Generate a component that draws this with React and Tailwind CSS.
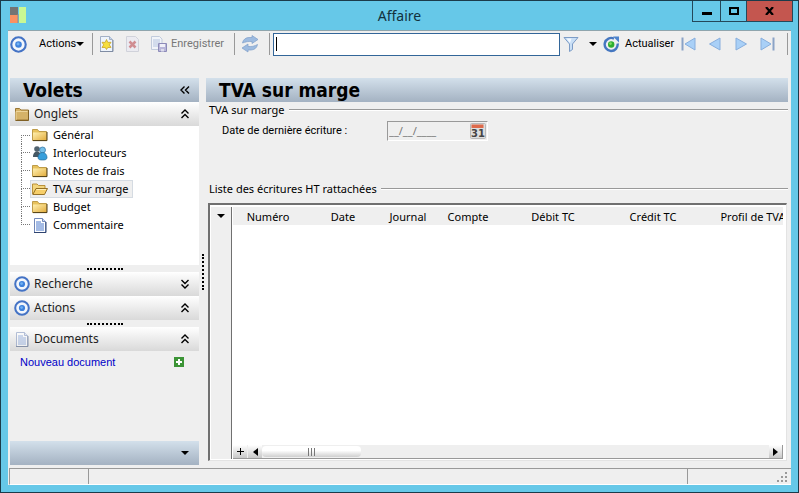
import React, { useState } from "react";

const tabs = [
  { id: "general", label: "Général", icon: "folder" },
  { id: "contacts", label: "Interlocuteurs", icon: "people" },
  { id: "expenses", label: "Notes de frais", icon: "folder" },
  { id: "margin", label: "TVA sur marge", icon: "open" },
  { id: "budget", label: "Budget", icon: "folder" },
  { id: "comment", label: "Commentaire", icon: "page" },
];

const columns = [
  { label: "Numéro", width: "w-[70px]" },
  { label: "Date", width: "w-[80px]" },
  { label: "Journal", width: "w-[50px]" },
  { label: "Compte", width: "w-[70px]" },
  { label: "Débit TC", width: "w-[100px]" },
  { label: "Crédit TC", width: "w-[100px]" },
  { label: "Profil de TVA", width: "w-[100px]" },
];

/* ---------- Icons ---------- */

function TargetIcon({ className = "size-4" }) {
  return (
    <svg viewBox="0 0 16 16" className={className}>
      <circle cx="8" cy="8" r="6.8" fill="#f2f6fc" stroke="#4473c5" strokeWidth="2" />
      <circle cx="8" cy="8" r="3.1" fill="#3f82dc" />
      <circle cx="7.6" cy="7.6" r="1.4" fill="#6fb0f2" />
    </svg>
  );
}

function FolderIcon() {
  return (
    <svg viewBox="0 0 16 16" className="size-4 shrink-0">
      <defs>
        <linearGradient id="folder" x1="0" y1="0" x2="1" y2="1">
          <stop offset="0" stopColor="#fff0b0" />
          <stop offset="1" stopColor="#e2ab3a" />
        </linearGradient>
      </defs>
      <path d="M.5 13.500V2.500h5L7 4.500h7.500v9z" fill="#e8c25c" stroke="#b08a30" strokeWidth=".8" />
      <path d="M1 5.500h13.500v8H1z" fill="url(#folder)" />
      <path d="M1 13.600h14V5" fill="none" stroke="#4e3c14" strokeWidth="1" />
    </svg>
  );
}

function OpenFolderIcon() {
  return (
    <svg viewBox="0 0 16 16" className="size-4 shrink-0">
      <path d="M.5 13V3h4.500L6.500 4.500H13V8" fill="#f3d57c" stroke="#b3892c" strokeWidth=".9" />
      <path d="M.8 13.500 4 7.500h11.500l-3 6z" fill="#f7cf6a" stroke="#8a6418" strokeWidth=".9" />
      <path d="M4.500 8.500h9.500" stroke="#fff2c0" strokeWidth=".9" />
    </svg>
  );
}

function BinderIcon() {
  return (
    <svg viewBox="0 0 16 16" className="size-4 shrink-0">
      <path d="M1.500 14V2.500h4L7 4h7.500v10z" fill="#d5b268" stroke="#9a7734" />
      <path d="M2 14V5.500h11.500" fill="none" stroke="#edd49a" />
      <path d="M1.500 14.500h13V4" fill="none" stroke="#806024" />
    </svg>
  );
}

function PeopleIcon() {
  return (
    <svg viewBox="0 0 16 16" className="size-4 shrink-0">
      <circle cx="5" cy="4" r="2.800" fill="#52636f" />
      <path d="M1 12c0-4 2-5.500 4-5.500s4 1.500 4 5.500z" fill="#465864" />
      <circle cx="10.500" cy="5" r="3" fill="#75bfe9" stroke="#2c6f9e" strokeWidth=".7" />
      <path d="M6 12.500c0-3 2-5 4.500-5s4.500 2 4.500 5c0 2-1.500 2.500-4.500 2.500S6 14.500 6 12.500z" fill="#369edb" stroke="#256b98" strokeWidth=".7" />
    </svg>
  );
}

function PageIcon({ className = "size-4 shrink-0" }) {
  return (
    <svg viewBox="0 0 16 16" className={className}>
      <path d="M2.500 1.500h8L13.500 4.500v11h-11z" fill="#fff" stroke="#7288b8" />
      <path d="M10.500 1.500v3h3" fill="#cfdcf3" stroke="#7288b8" />
      <path d="M4 5h5M4 7h8M4 9h8M4 11h8M4 13h8" stroke="#4a78cc" />
      <path d="M2 15.500h12V5" fill="none" stroke="#2f4470" />
    </svg>
  );
}

function TabIcon({ name }) {
  if (name === "people") return <PeopleIcon />;
  if (name === "open") return <OpenFolderIcon />;
  if (name === "page") return <PageIcon />;
  return <FolderIcon />;
}

function NewIcon() {
  return (
    <svg viewBox="0 0 16 16" className="size-4">
      <path d="M1.500.5h9l3 3v12h-12z" fill="#eef4fc" stroke="#a3b0c5" />
      <path d="M1 15.500h13V4" fill="none" stroke="#7f8ca3" />
      <path d="M10.500.5v3h3" fill="#c4d6ef" stroke="#a3b0c5" />
      <path d="m7.500 3.500 1.300 2.900 3.200-.1-1.700 2.500 1.700 2.600-3.200.1-1.300 2-1.300-2.100-3.200.1 1.700-2.700L3 6.300l3.200.1z" fill="#f6df3c" stroke="#c9a523" strokeWidth=".8" />
    </svg>
  );
}

function DeleteIcon() {
  return (
    <svg viewBox="0 0 16 16" className="size-4">
      <path d="M1.500.5h9l3 3v12h-12z" fill="#ebebf1" stroke="#d0d2da" />
      <path d="m4.500 5.500 6 6m0-6-6 6" stroke="#d08d92" strokeWidth="2.500" />
    </svg>
  );
}

function SaveIcon() {
  return (
    <svg viewBox="0 0 16 16" className="size-4">
      <path d="M.5.5h8L11 3v10.500H.5z" fill="#f1f4f9" stroke="#c1cbdc" />
      <path d="M2 4h7M2 6h7M2 8h5M2 10h5" stroke="#b4c4e0" />
      <path d="M7.500 7.500h8v8h-8z" fill="#b9b7da" stroke="#8d8bb8" />
      <path d="M9 8h5v3H9z" fill="#f0f0f8" />
      <path d="M10 13h3v2.500h-3z" fill="#dddcec" />
    </svg>
  );
}

function SyncIcon() {
  return (
    <svg viewBox="0 0 18 18" className="size-[18px]">
      <path d="M1.500 8C2 4.500 5 2.500 8 2.500h3V.5L17 4.500 11 8.500v-2H8.500C6 6.500 4.500 7 1.500 8z" fill="#9dbbe0" stroke="#7f9fc8" strokeWidth=".7" />
      <path d="M16.500 9.500c-.5 3.500-3.500 5.500-6.500 5.500H7v2L1 13l6-4v2.500h2.500c2.500 0 4-.5 7-2z" fill="#9dbbe0" stroke="#7f9fc8" strokeWidth=".7" />
    </svg>
  );
}

function FunnelIcon() {
  return (
    <svg viewBox="0 0 16 16" className="size-4">
      <path d="M1 1.500h14L9.500 8v5.500l-3 2V8z" fill="#c9dff6" stroke="#7d9cc6" />
      <path d="M3.500 2.500h5L7 7z" fill="#f4f9ff" />
    </svg>
  );
}

function ReloadIcon() {
  return (
    <svg viewBox="0 0 17 17" className="size-[17px]">
      <path d="M14.600 7.500A6.500 6.500 0 1 1 11 2.600" fill="none" stroke="#4577c0" strokeWidth="2.400" />
      <path d="M10 .5h6v6z" fill="#4d83cd" />
      <circle cx="8.200" cy="8.500" r="3.200" fill="#2fae2f" />
      <circle cx="7.500" cy="7.600" r="1.300" fill="#7fdc62" />
    </svg>
  );
}

function NavIcon({ dir, bar }) {
  return (
    <svg viewBox="0 0 16 16" className={dir === "left" ? "size-4" : "size-4 rotate-180"}>
      <path d={bar ? "M14 2v12L4 8z" : "M13 2v12L2.500 8z"} fill="#a9d0f7" stroke="#87aedd" />
      {bar && <path d="M1.500 1.500v13" stroke="#8ba3c6" strokeWidth="2" />}
    </svg>
  );
}

function CalendarIcon() {
  return (
    <svg viewBox="0 0 16 16" className="size-4">
      <rect x=".5" y=".5" width="15" height="15" rx="1" fill="#dedede" stroke="#b9b9b9" />
      <path d="M1.500 1.500h12v3.500h-12z" fill="#dd6a4b" />
      <text x="8" y="13.500" textAnchor="middle" fontSize="10" fontWeight="bold" fill="#444" fontFamily="DejaVu Sans, sans-serif">31</text>
    </svg>
  );
}

function Caret() {
  return (
    <svg viewBox="0 0 8 4" className="h-1 w-2 shrink-0">
      <path d="M0 0h8L4 4z" fill="#000" />
    </svg>
  );
}

function Chevrons({ dir }) {
  const turn = { up: "size-2.5", down: "size-2.5 rotate-180", left: "size-2.5 -rotate-90" }[dir];
  return (
    <svg viewBox="0 0 10 10" className={turn}>
      <path d="M1.500 4.500 5 1l3.500 3.500M1.500 9 5 5.500 8.500 9" fill="none" stroke="#000" strokeWidth="1.400" />
    </svg>
  );
}

/* ---------- Building blocks ---------- */

function Separator() {
  return <div className="h-[22px] w-px shrink-0 bg-[#999]" />;
}

function PanelHeader({ icon, title, dir }) {
  return (
    <button className="flex h-6 w-full shrink-0 items-center gap-1 bg-linear-to-b from-white to-[#d9d9d9] pr-[9px] pl-1 text-left text-[12px] text-[#222]">
      <span className="flex size-4 items-center">{icon}</span>
      <span className="flex-1">{title}</span>
      <Chevrons dir={dir} />
    </button>
  );
}

function Gripper() {
  return (
    <div className="flex h-[7px] shrink-0 items-center justify-center">
      <div className="w-9 border-t-2 border-dotted border-black" />
    </div>
  );
}

function SectionLabel({ children }) {
  return (
    <div className="flex h-4 items-center gap-1 pl-[3px]">
      <span>{children}</span>
      <span className="h-[2px] flex-1 border-b border-white bg-[#999]" />
    </div>
  );
}

function TitleBar() {
  return (
    <header className="grid h-[29px] shrink-0 grid-cols-[1fr_auto_1fr] text-[#12313d]">
      <svg viewBox="0 0 16 16" className="mt-1.5 ml-[9px] size-4">
        <path d="M0 0h8v8H0z" fill="#747474" />
        <path d="M0 8h8v8H0z" fill="#fb9162" />
        <path d="M9 0h7v16H9z" fill="#c9f893" />
        <path d="M8 7v9" stroke="#8d8d8d" />
      </svg>
      <h1 className="text-[14px] leading-[29px]">Affaire</h1>
      <div className="mr-[5px] flex h-[21px] justify-self-end border-x border-b border-[#24485a]">
        <button aria-label="Réduire" className="flex w-[27px] items-center justify-center">
          <span className="mt-1 h-[3px] w-2.5 bg-black" />
        </button>
        <button aria-label="Agrandir" className="flex w-[27px] items-center justify-center border-x border-[#24485a]">
          <span className="h-2 w-2.5 border-2 border-black" />
        </button>
        <button aria-label="Fermer" className="flex w-[45px] items-center justify-center bg-[#c4564f]">
          <svg viewBox="0 0 9 8" className="h-2 w-[9px]">
            <path d="m1 0 7 8M8 0 1 8" stroke="#000" strokeWidth="2.200" />
          </svg>
        </button>
      </div>
    </header>
  );
}

function Toolbar() {
  return (
    <div className="flex h-[47px] shrink-0 items-start pt-px pr-[3px] pl-0.5 font-['Roboto',sans-serif] text-[11px]">
      <div className="flex h-6 flex-1 items-center">
        <TargetIcon className="size-[17px] shrink-0" />
        <button className="ml-3 flex w-[45px] items-center justify-between">
          Actions <Caret />
        </button>
        <div className="ml-2 flex"><Separator /></div>
        <button aria-label="Nouveau" className="ml-1.5"><NewIcon /></button>
        <button aria-label="Supprimer" className="ml-2.5"><DeleteIcon /></button>
        <button className="ml-2.5 flex w-[75px] items-center gap-1 text-[#777]">
          <span className="shrink-0"><SaveIcon /></span> Enregistrer
        </button>
        <div className="ml-2 flex"><Separator /></div>
        <button aria-label="Synchroniser" className="ml-1.5"><SyncIcon /></button>
        <div className="ml-2.5 flex"><Separator /></div>
        <div className="relative ml-[3px] flex-1">
          <input aria-label="Recherche" className="block h-[23px] w-full border border-[#336699] bg-white px-1 outline-none" />
          <span className="absolute top-1 left-[3px] h-3.5 w-px bg-black" />
        </div>
        <button aria-label="Filtrer" className="ml-[3px]"><FunnelIcon /></button>
        <button aria-label="Options du filtre" className="ml-2.5"><Caret /></button>
        <button className="ml-1.5 flex w-[70px] items-center gap-[5px]">
          <span className="shrink-0"><ReloadIcon /></span> Actualiser
        </button>
        <div className="ml-2 flex gap-2.5">
          <button aria-label="Premier"><NavIcon dir="left" bar /></button>
          <button aria-label="Précédent"><NavIcon dir="left" /></button>
          <button aria-label="Suivant"><NavIcon dir="right" /></button>
          <button aria-label="Dernier"><NavIcon dir="right" bar /></button>
        </div>
        <div className="ml-3 flex"><Separator /></div>
      </div>
    </div>
  );
}

function Sidebar() {
  const [active, setActive] = useState("margin");

  return (
    <aside className="flex w-[189px] shrink-0 flex-col">
      <div className="flex h-6 shrink-0 items-center justify-between bg-linear-to-b from-[#d3e0eb] to-[#a4b2c2] pr-[9px] pl-[13px]">
        <h2 className="font-['DejaVu_Sans_Condensed','DejaVu_Sans',sans-serif] text-[19px] leading-6 font-bold">Volets</h2>
        <button aria-label="Replier"><Chevrons dir="left" /></button>
      </div>

      <PanelHeader icon={<BinderIcon />} title="Onglets" dir="up" />
      <nav className="h-[139px] shrink-0 bg-white pl-[11px]">
        {tabs.map((tab, i) => (
          <div key={tab.id} className="flex h-[18px]">
            {/* tree branch */}
            <div className={i === 0 ? "flex w-[9px] flex-col justify-end" : "flex w-[9px] flex-col"}>
              <div className={i === 0 ? "h-[9px] border-t border-l border-dotted border-[#777]" : "h-[9px] border-b border-l border-dotted border-[#777]"} />
              {i > 0 && i < tabs.length - 1 && <div className="h-[9px] border-l border-dotted border-[#777]" />}
            </div>
            <button
              onClick={() => setActive(tab.id)}
              className={
                active === tab.id
                  ? "flex items-center gap-[5px] border border-[#d5dbe2] bg-[#efefef] pr-[3px] pl-px whitespace-nowrap"
                  : "flex items-center gap-[5px] border border-transparent pr-[3px] pl-px whitespace-nowrap"
              }
            >
              <TabIcon name={tab.icon} />
              {tab.label}
            </button>
          </div>
        ))}
      </nav>

      <Gripper />
      <PanelHeader icon={<TargetIcon />} title="Recherche" dir="down" />
      <PanelHeader icon={<TargetIcon />} title="Actions" dir="up" />
      <Gripper />
      <PanelHeader icon={<PageIcon className="size-4 opacity-50" />} title="Documents" dir="up" />

      <div className="flex h-[21px] items-center justify-between pr-[15px] pl-2.5">
        <a href="#document" className="font-['Liberation_Sans',sans-serif] text-[#0000c8]">Nouveau document</a>
        <button aria-label="Ajouter">
          <svg viewBox="0 0 10 10" className="size-2.5">
            <path d="M0 0h10v10H0z" fill="#3c9436" />
            <path d="M5 2v6M2 5h6" stroke="#fff" strokeWidth="2" />
          </svg>
        </button>
      </div>

      <div className="mt-auto flex h-6 items-center justify-end bg-linear-to-b from-[#d3e0eb] to-[#a4b2c2] pr-2.5">
        <button aria-label="Plus de volets"><Caret /></button>
      </div>
    </aside>
  );
}

function EntriesGrid() {
  return (
    <div className="mt-1.5 mr-px ml-0.5 flex min-h-0 flex-1 border border-t-2 border-l-2 border-[#e3e3e3] border-t-[#707070] border-l-[#707070] bg-white px-px pt-0.5 pb-px">
      <div className="w-[21px] shrink-0 border-r border-[#707070] bg-[#efefef]">
        <button aria-label="Colonnes" className="flex h-[18px] w-full items-center justify-center"><Caret /></button>
      </div>
      <div className="flex min-w-0 flex-1 flex-col pr-0.5 pl-px">
        <div className="flex-1 overflow-hidden">
          <table className="w-[570px] table-fixed">
            <thead className="bg-[#efefef]">
              <tr className="h-[18px]">
                {columns.map((col) => (
                  <th key={col.label} className={`p-0 pt-0.5 text-center font-normal whitespace-nowrap ${col.width}`}>{col.label}</th>
                ))}
              </tr>
            </thead>
          </table>
        </div>
        {/* Horizontal scroll bar */}
        <div className="flex h-3.5 shrink-0 border-b border-[#999] bg-[#efefef]">
          <button aria-label="Ajouter une ligne" className="flex w-3.5 items-center justify-center bg-linear-to-b from-white to-[#c8c8c8]">
            <svg viewBox="0 0 7 7" className="size-[7px]"><path d="M3.500 0v7M0 3.500h7" stroke="#000" /></svg>
          </button>
          <button aria-label="Défiler à gauche" className="ml-px flex w-3.5 items-center justify-center bg-linear-to-b from-white to-[#c8c8c8]">
            <svg viewBox="0 0 5 8" className="h-2 w-[5px]"><path d="M5 0v8L0 4z" /></svg>
          </button>
          <div className="my-px flex w-[99px] items-center justify-center gap-0.5 rounded-sm bg-linear-to-b from-white from-40% to-[#cfcfcf]">
            <span className="h-2 w-px bg-[#777]" />
            <span className="h-2 w-px bg-[#777]" />
            <span className="h-2 w-px bg-[#777]" />
          </div>
          <button aria-label="Défiler à droite" className="ml-auto flex w-3.5 items-center justify-center border-r border-[#999] bg-linear-to-b from-white to-[#c8c8c8]">
            <svg viewBox="0 0 5 8" className="h-2 w-[5px]"><path d="M0 0v8l5-4z" /></svg>
          </button>
        </div>
      </div>
    </div>
  );
}

function App() {
  return (
    <div className="flex min-h-screen flex-col border border-[#1b3b4a] bg-[#66c8e8] font-['Noto_Sans',sans-serif] text-[11px] leading-4 text-black">
      <TitleBar />

      <div className="mx-[7px] mb-[7px] flex flex-1 flex-col border-t border-[#8fa5ad] bg-[#efefef]">
        <Toolbar />

        <div className="flex flex-1 pr-[3px] pl-0.5">
          <Sidebar />

          <div className="flex w-[7px] shrink-0 items-center justify-center">
            <div className="h-9 border-l-2 border-dotted border-black" />
          </div>

          <main className="flex min-w-0 flex-1 flex-col">
            <h2 className="h-6 bg-linear-to-b from-[#d3e0eb] to-[#a4b2c2] pl-[13px] font-['DejaVu_Sans_Condensed','DejaVu_Sans',sans-serif] text-[19px] leading-6 font-bold">TVA sur marge</h2>

            <SectionLabel>TVA sur marge</SectionLabel>
            <div className="mt-[3px] flex items-center pl-4">
              <label htmlFor="lastEntry" className="w-[165px] font-['Roboto',sans-serif]">Date de dernière écriture :</label>
              <div className="flex h-5 w-[101px] items-center border border-white border-t-[#999] border-l-[#999]">
                <input id="lastEntry" defaultValue="__/__/____" disabled className="w-[82px] pl-px text-[#777]" />
                <button aria-label="Calendrier"><CalendarIcon /></button>
              </div>
            </div>

            <div className="mt-10">
              <SectionLabel>Liste des écritures HT rattachées</SectionLabel>
            </div>
            <EntriesGrid />
            <div className="h-1 shrink-0" />
          </main>
        </div>

        {/* Status bar */}
        <footer className="mt-[3px] ml-px flex h-[17px] shrink-0 border-t border-l border-[#999] border-b border-b-white">
          <div className="w-[79px] border-r border-[#999]" />
          <div className="flex-1 border-r border-[#999]" />
          <div className="flex w-[103px] items-end justify-end pr-1 pb-0.5">
            <svg viewBox="0 0 10 10" className="size-2.5" fill="#999">
              <path d="M8 0h2v2H8zM4 4h2v2H4zM8 4h2v2H8zM0 8h2v2H0zM4 8h2v2H4zM8 8h2v2H8z" />
            </svg>
          </div>
        </footer>
      </div>
    </div>
  );
}

export default App;
